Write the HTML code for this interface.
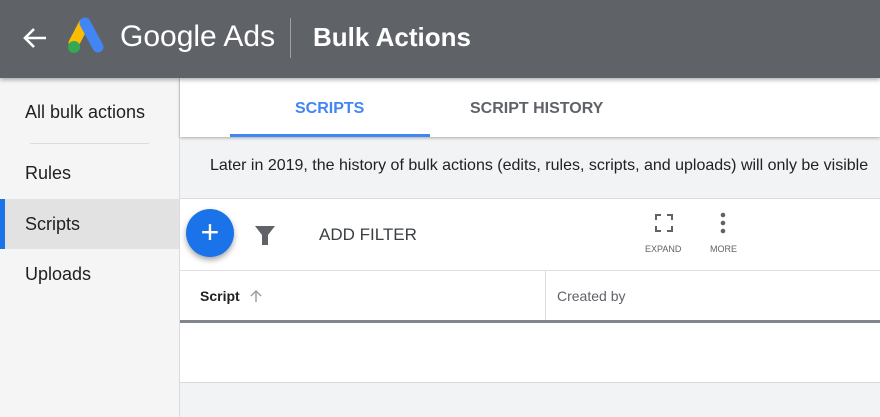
<!DOCTYPE html>
<html><head><style>
*{margin:0;padding:0;box-sizing:border-box}
body{width:880px;height:417px;overflow:hidden;font-family:"Liberation Sans",Arial,sans-serif;background:#f1f3f4;position:relative}
.hdr{position:absolute;left:0;top:0;width:880px;height:78px;background:#5f6368;box-shadow:0 2px 4px rgba(0,0,0,.3);z-index:3}
.abs{position:absolute}
.side{position:absolute;left:0;top:78px;width:180px;height:339px;background:#f5f5f5;border-right:1px solid #dadce0}
.side div{position:absolute;left:25px;font-size:18px;color:#202124}
</style></head><body>
<div class="hdr">
<svg class="abs" style="left:22px;top:27px" width="26" height="22" viewBox="0 0 26 22"><path d="M24 11H4M12 2L3 11l9 9" stroke="#fff" stroke-width="2.6" fill="none"/></svg>
<svg class="abs" style="left:64px;top:17px" width="42" height="38" viewBox="0 0 42 38"><path d="M20 7L10 26" stroke="#fbbc04" stroke-width="11" stroke-linecap="round"/><path d="M21 6l13 24" stroke="#4285f4" stroke-width="11" stroke-linecap="round"/><circle cx="10" cy="30" r="6" fill="#34a853"/></svg>
<div class="abs" style="left:120px;top:20px;font-size:30px;color:#fff">Google Ads</div>
<div class="abs" style="left:290px;top:18px;width:1px;height:40px;background:#9aa0a6"></div>
<div class="abs" style="left:313px;top:22px;font-size:26px;font-weight:bold;color:#fff">Bulk Actions</div>
</div>
<div class="side">
<div style="top:24px">All bulk actions</div>
<div style="left:30px;top:65px;width:119px;height:1px;background:#dadce0"></div>
<div style="top:85px">Rules</div>
<div style="left:0;top:121px;width:179px;height:50px;background:#e2e2e2"></div>
<div style="left:0;top:121px;width:5px;height:50px;background:#1a73e8"></div>
<div style="top:136px">Scripts</div>
<div style="top:186px">Uploads</div>
</div>
<div class="abs" style="left:180px;top:78px;width:700px;height:59px;background:#fff;box-shadow:0 1px 3px rgba(0,0,0,.3)"></div>
<div class="abs" style="left:295px;top:100px;font-size:16px;font-weight:bold;color:#4285f4">SCRIPTS</div>
<div class="abs" style="left:230px;top:134px;width:200px;height:3px;background:#4285f4"></div>
<div class="abs" style="left:470px;top:100px;font-size:16px;font-weight:bold;color:#5f6368">SCRIPT HISTORY</div>
<div class="abs" style="left:210px;top:157px;font-size:16px;color:#202124;white-space:nowrap">Later in 2019, the history of bulk actions (edits, rules, scripts, and uploads) will only be visible</div>
<div class="abs" style="left:180px;top:198px;width:700px;height:184px;background:#fff;border-top:1px solid #dadce0"></div>
<div class="abs" style="left:186px;top:209px;width:48px;height:48px;border-radius:50%;background:#1a73e8;box-shadow:0 3px 6px rgba(0,0,0,.35);color:#fff;font-size:32px;line-height:46px;text-align:center">+</div>
<svg class="abs" style="left:254px;top:224px" width="22" height="22" viewBox="0 0 22 22"><path d="M1 2h20l-7 9v10h-6V11z" fill="#5f6368"/></svg>
<div class="abs" style="left:319px;top:225px;font-size:17px;color:#3c4043">ADD FILTER</div>
<svg class="abs" style="left:655px;top:214px" width="18" height="18" viewBox="0 0 18 18" fill="none" stroke="#5f6368" stroke-width="2"><path d="M1 6V1h5M12 1h5v5M17 12v5h-5M6 17H1v-5"/></svg>
<div class="abs" style="left:645px;top:244px;font-size:9px;color:#5f6368">EXPAND</div>
<svg class="abs" style="left:720px;top:212px" width="6" height="22"><circle cx="3" cy="3" r="2.3" fill="#5f6368"/><circle cx="3" cy="11" r="2.3" fill="#5f6368"/><circle cx="3" cy="19" r="2.3" fill="#5f6368"/></svg>
<div class="abs" style="left:710px;top:244px;font-size:9px;color:#5f6368">MORE</div>
<div class="abs" style="left:180px;top:270px;width:700px;height:1px;background:#e0e0e0"></div>
<div class="abs" style="left:200px;top:288px;font-size:14px;font-weight:bold;color:#202124">Script</div>
<svg class="abs" style="left:249px;top:289px" width="14" height="14" viewBox="0 0 14 14"><path d="M7 13V2M2 7l5-5 5 5" stroke="#9aa0a6" stroke-width="1.5" fill="none"/></svg>
<div class="abs" style="left:545px;top:271px;width:1px;height:50px;background:#dadce0"></div>
<div class="abs" style="left:557px;top:288px;font-size:14px;color:#5f6368">Created by</div>
<div class="abs" style="left:180px;top:320px;width:700px;height:3px;background:#80868b"></div>
<div class="abs" style="left:180px;top:382px;width:700px;height:1px;background:#dadce0"></div>
</body></html>
